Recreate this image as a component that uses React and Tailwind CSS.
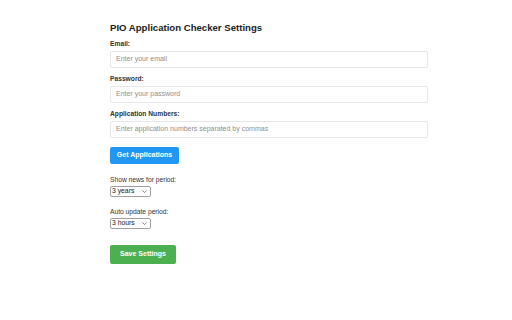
import React from "react";

function Field({ label, placeholder, mt }) {
  return (
    <div className={mt}>
      <div className="text-[6.7px] leading-[8px] font-bold text-[#333]">{label}</div>
      <div className="mt-[3px] h-[17px] w-[318px] border border-[#e6e6e6] rounded-[2px] flex items-center px-[5px] text-[7px] text-[#8f8f8f]">
        {placeholder}
      </div>
    </div>
  );
}

function Sel({ value }) {
  return (
    <div className="mt-[2px] h-[11px] w-[41px] border border-[#a0a0a0] rounded-[2px] flex items-center justify-between pl-[1px] pr-[3px] text-[6.8px] leading-none text-[#222]">
      <span>{value}</span>
      <svg width="5" height="3" viewBox="0 0 10 6" fill="none" stroke="#555" strokeWidth="1.4">
        <path d="M1 1l4 4 4-4" />
      </svg>
    </div>
  );
}

export default function App() {
  return (
    <div
      className="w-[512px] h-[320px] bg-white pl-[110px] pt-[22px]"
      style={{ fontFamily: '"Liberation Sans", Arial, sans-serif' }}
    >
      <div className="text-[9.6px] leading-[12px] font-bold text-[#222]">PIO Application Checker Settings</div>
      <div className="pt-[6px]" />
      <Field label="Email:" placeholder="Enter your email" mt="" />
      <Field label="Password:" placeholder="Enter your password" mt="mt-[7px]" />
      <Field label="Application Numbers:" placeholder="Enter application numbers separated by commas" mt="mt-[7px]" />
      <div className="mt-[9px] h-[17px] w-[69px] bg-[#2196f3] rounded-[2px] flex items-center justify-center text-[7px] font-bold text-white">
        Get Applications
      </div>
      <div className="mt-[12px] text-[6.7px] leading-[8px] text-[#333]">Show news for period:</div>
      <Sel value="3 years" />
      <div className="mt-[11px] text-[6.7px] leading-[8px] text-[#333]">Auto update period:</div>
      <Sel value="3 hours" />
      <div className="mt-[16px] h-[19px] w-[66px] bg-[#4caf50] rounded-[2px] flex items-center justify-center text-[7px] font-bold text-white">
        Save Settings
      </div>
    </div>
  );
}
